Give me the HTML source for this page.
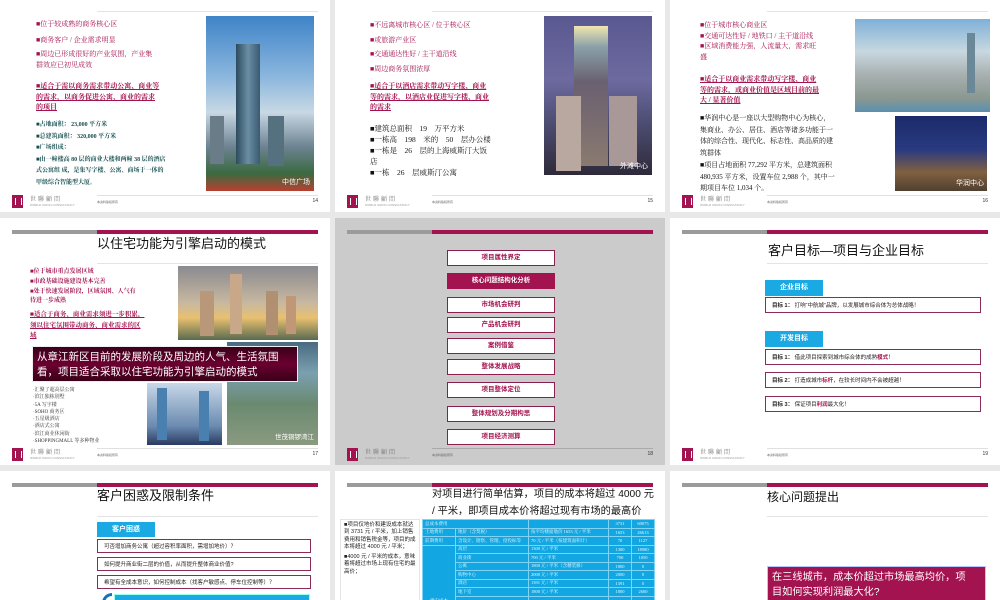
<!DOCTYPE html>
<html style="width:1000px;height:600px;overflow:hidden"><head><meta charset="utf-8"><style>
*{margin:0;padding:0;box-sizing:border-box}
body{width:1000px;height:600px;background:#e8e8e8;position:relative;overflow:hidden;font-family:"Liberation Sans","Noto Sans CJK SC",sans-serif}
.s{position:absolute;width:330px;height:247px;background:#fff;overflow:hidden}
.a{position:absolute;white-space:nowrap}
.bar1{position:absolute;left:12px;top:12px;width:85px;height:4px;background:#9b9b9b}
.bar2{position:absolute;left:97px;top:12px;width:221px;height:4px;background:#a3134f}
.tl{position:absolute;left:97px;width:221px;height:1px;background:#e4e4e4}
.fl{position:absolute;left:97px;top:230px;width:221px;height:1px;background:#e0e0e0}
.logo{position:absolute;left:12px;top:230px;width:11px;height:13px;background:#a3134f}
.logo:after{content:"";position:absolute;left:3px;top:3px;width:5px;height:7px;border-left:1px solid #fff;border-right:1px solid #fff}
.lt{position:absolute;left:30px;top:229px;font-size:6px;color:#777;font-family:"Noto Serif CJK SC",serif;letter-spacing:2px}
.lt2{position:absolute;left:30px;top:238px;font-size:3px;color:#999;white-space:nowrap}
.ft{position:absolute;left:97px;top:235px;font-size:3px;color:#666}
.pn{position:absolute;right:12px;top:233px;font-size:5px;color:#333}
.sf{font-family:"Liberation Serif","Noto Serif CJK SC",serif}
.m{color:#a3134f}.g{color:#174f50}
.b{font-weight:bold}.u{text-decoration:underline}
.t{font-size:7px;line-height:10.5px}
.ttl{position:absolute;font-size:13px;color:#111;white-space:nowrap}
.bb{position:absolute;background:#1aa9e3;color:#fff;font-size:7px;text-align:center;font-weight:bold}
.bx{position:absolute;border:1.5px solid #8c2a5a;font-size:5.5px;padding-left:6px;color:#222;background:#fff;display:flex;align-items:center;white-space:nowrap}
.nb{position:absolute;left:112px;width:108px;height:16px;border:1.5px solid #8a1f4f;background:#fff;color:#a3134f;font-size:6.5px;text-align:center;line-height:13px;font-weight:bold}
table{border-collapse:collapse;font-family:"Liberation Serif","Noto Serif CJK SC",serif}
td{border:1px solid #7fd4f3;color:#e6f7ff;font-size:4.5px;padding:0 2px;height:8.5px;background:#12a7e2;white-space:nowrap;overflow:hidden}
</style></head><body>

<!-- slide 14 -->
<div class="s" style="left:0;top:-35px">
<div class="tl" style="top:46px"></div>
<div class="a sf t m" style="left:36px;top:54px">■位于较成熟的商务核心区</div>
<div class="a sf t m" style="left:36px;top:70px">■商务客户 / 企业需求明显</div>
<div class="a sf t m" style="left:36px;top:84px">■周边已形成很好的产业氛围，产业集<br>群效应已初见成效</div>
<div class="a sf t m b u" style="left:36px;top:116px">■适合于需以商务需求带动公寓、商业等<br>的需求，以商务促进公寓、商业的需求<br>的项目</div>
<div class="a sf g b" style="left:36px;top:155px;font-size:6px;line-height:11.5px">■占地面积： 23,000 平方米<br>■总建筑面积： 320,000 平方米<br>■广场组成：<br>■由一幢楼高 80 层的商业大楼和两幢 38 层的酒店<br>式公寓组 成，是集写字楼、公寓、商场于一体的<br>甲级综合智能型大厦。</div>
<div class="a" style="left:206px;top:51px;width:108px;height:175px;background:linear-gradient(180deg,#3f84c8 0%,#8cb7de 35%,#c8d8e4 55%,#6c8290 75%,#3a6a40 90%,#b84030 100%)">
<div class="a" style="left:30px;top:28px;width:24px;height:120px;background:linear-gradient(90deg,#2d4a5e,#6b8ea4,#3a5a70)"></div>
<div class="a" style="left:62px;top:100px;width:16px;height:50px;background:#55707e"></div>
<div class="a" style="left:4px;top:100px;width:14px;height:48px;background:#6a7c88"></div>
<div class="a" style="right:4px;bottom:4px;color:#fff;font-size:7px">中信广场</div></div>
<div class="fl"></div><div class="logo"></div><div class="lt">世聯顧問</div><div class="lt2">WORLD UNION CONSULTANCY</div><div class="ft">本资料版权所有</div><div class="pn">14</div>
</div>

<!-- slide 15 -->
<div class="s" style="left:335px;top:-35px">
<div class="tl" style="top:46px"></div>
<div class="a sf t m" style="left:35px;top:53px;line-height:14.5px">■不远离城市核心区 / 位于核心区<br>■或旅游产业区<br>■交通通达性好 / 主干道沿线<br>■周边商务氛围浓厚</div>
<div class="a sf t m b u" style="left:35px;top:116px">■适合于以酒店需求带动写字楼、商业<br>等的需求，以酒店业促进写字楼、商业<br>的需求</div>
<div class="a sf" style="left:35px;top:158px;font-size:7.5px;line-height:11px;color:#111">■建筑总面积　19　万平方米<br>■一栋高　198　米的　50　层办公楼<br>■一栋是　26　层的上海威斯汀大饭<br>店<br>■一栋　26　层威斯汀公寓</div>
<div class="a" style="left:209px;top:51px;width:108px;height:159px;background:linear-gradient(180deg,#5a5890 0%,#6d6aa0 40%,#4a4a6e 70%,#2e2a3a 100%)">
<div class="a" style="left:30px;top:10px;width:34px;height:140px;background:linear-gradient(180deg,#f0e6b0 0%,#8aa0a8 15%,#6a6070 40%,#8a7a70 100%)"></div>
<div class="a" style="left:12px;top:80px;width:25px;height:75px;background:#b8a8a0"></div>
<div class="a" style="left:65px;top:80px;width:28px;height:70px;background:#a89898"></div>
<div class="a" style="right:4px;bottom:4px;color:#fff;font-size:7px">外滩中心</div></div>
<div class="fl"></div><div class="logo"></div><div class="lt">世聯顧問</div><div class="lt2">WORLD UNION CONSULTANCY</div><div class="ft">本资料版权所有</div><div class="pn">15</div>
</div>

<!-- slide 16 -->
<div class="s" style="left:670px;top:-35px">
<div class="tl" style="top:46px"></div>
<div class="a sf t m" style="left:30px;top:55px">■位于城市核心商业区<br>■交通可达性好 / 地铁口 / 主干道沿线<br>■区域消费能力强，人流量大，需求旺<br>盛</div>
<div class="a sf t m b u" style="left:30px;top:109px">■适合于以商业需求带动写字楼、商业<br>等的需求，或商业价值是区域目前的最<br>大 / 显著价值</div>
<div class="a sf" style="left:30px;top:148px;font-size:7px;line-height:11.5px;color:#111">■华润中心是一座以大型购物中心为核心，<br>集商业、办公、居住、酒店等诸多功能于一<br>体的综合性、现代化、标志性、高品质的建<br>筑群体</div>
<div class="a sf" style="left:30px;top:195px;font-size:7px;line-height:11.5px;color:#111">■项目占地面积 77,292 平方米，总建筑面积<br>480,935 平方米，设置车位 2,988 个，其中一<br>期项目车位 1,034 个。</div>
<div class="a" style="left:185px;top:54px;width:135px;height:93px;background:linear-gradient(180deg,#7fb0d8 0%,#c8d8e0 35%,#a8b0b0 60%,#8a9890 85%,#5a90b0 100%)">
<div class="a" style="left:112px;top:14px;width:8px;height:60px;background:#6a8898"></div></div>
<div class="a" style="left:225px;top:151px;width:92px;height:75px;background:linear-gradient(180deg,#1a2a6a 0%,#2a3a80 45%,#806040 75%,#504030 100%)">
<div class="a" style="right:3px;bottom:3px;color:#fff;font-size:7px">华润中心</div></div>
<div class="fl"></div><div class="logo"></div><div class="lt">世聯顧問</div><div class="lt2">WORLD UNION CONSULTANCY</div><div class="ft">本资料版权所有</div><div class="pn">16</div>
</div>

<!-- slide 17 -->
<div class="s" style="left:0;top:218px">
<div class="bar1"></div><div class="bar2"></div>
<div class="ttl" style="left:97px;top:15px">以住宅功能为引擎启动的模式</div>
<div class="tl" style="top:45px"></div>
<div class="a sf m b" style="left:30px;top:50px;font-size:6px;line-height:9.8px">■位于城市重点发展区域<br>■市政基础设施建设基本完善<br>■处于快速发展阶段，区域氛围、人气有<br>待进一步成熟</div>
<div class="a sf m b u" style="left:30px;top:92px;font-size:6.5px;line-height:10.5px">■适合于商务、商业需求须进一步积累，<br>须以住宅氛围带动商务、商业需求的区<br>域</div>
<div class="a" style="left:178px;top:48px;width:140px;height:74px;background:linear-gradient(180deg,#8a8a90 0%,#c8b8a0 50%,#e8c070 70%,#5a6a50 100%)">
<div class="a" style="left:52px;top:8px;width:12px;height:60px;background:#c8a888"></div>
<div class="a" style="left:22px;top:25px;width:14px;height:45px;background:#b89878"></div>
<div class="a" style="left:88px;top:25px;width:12px;height:44px;background:#b09070"></div>
<div class="a" style="left:108px;top:30px;width:10px;height:38px;background:#c09878"></div></div>
<div class="a" style="left:227px;top:124px;width:91px;height:103px;background:linear-gradient(180deg,#4a6a80 0%,#7aa0b0 30%,#6a8a70 60%,#8a9a80 100%)">
<div class="a" style="right:4px;bottom:4px;color:#fff;font-size:6.5px">世茂铜锣湾江</div></div>
<div class="a" style="left:147px;top:165px;width:75px;height:62px;background:linear-gradient(180deg,#c8d8e8,#6a8ab0 70%,#2a3a60)">
<div class="a" style="left:10px;top:5px;width:10px;height:52px;background:#4a80b0"></div>
<div class="a" style="left:52px;top:8px;width:10px;height:50px;background:#4a80b0"></div></div>
<div class="a" style="left:32px;top:128px;width:266px;height:36px;background:linear-gradient(180deg,#3a0018,#6a0030 50%,#3a0018);border:1px solid #eee;color:#fff;font-size:10.5px;line-height:15px;padding:3px 0 0 4px;white-space:nowrap;overflow:hidden">从章江新区目前的发展阶段及周边的人气、生活氛围<br>看，项目适合采取以住宅功能为引擎启动的模式</div>
<div class="a sf" style="left:33px;top:169px;font-size:5px;line-height:7.3px;color:#333">·汇聚了超高层公寓<br>·滨江独栋别墅<br>·5A 写字楼<br>·SOHO 商务区<br>·五星级酒店<br>·酒店式公寓<br>·滨江商业休闲街<br>·SHOPPINGMALL 等多种物业</div>
<div class="fl"></div><div class="logo"></div><div class="lt">世聯顧問</div><div class="lt2">WORLD UNION CONSULTANCY</div><div class="ft">本资料版权所有</div><div class="pn">17</div>
</div>

<!-- slide 18 -->
<div class="s" style="left:335px;top:218px;background:#cbcbcb">
<div class="bar1"></div><div class="bar2"></div>
<div class="nb" style="top:32px">项目属性界定</div>
<div class="nb" style="top:55px;background:#a3134f;color:#fff;border-color:#a3134f">核心问题结构化分析</div>
<div class="nb" style="top:79px">市场机会研判</div>
<div class="nb" style="top:99px">产品机会研判</div>
<div class="nb" style="top:120px">案例借鉴</div>
<div class="nb" style="top:141px">整体发展战略</div>
<div class="nb" style="top:164px">项目整体定位</div>
<div class="nb" style="top:188px">整体规划及分期构思</div>
<div class="nb" style="top:211px">项目经济测算</div>
<div class="fl" style="background:#aaa"></div><div class="logo"></div><div class="lt">世聯顧問</div><div class="lt2">WORLD UNION CONSULTANCY</div><div class="ft">本资料版权所有</div><div class="pn">18</div>
</div>

<!-- slide 19 -->
<div class="s" style="left:670px;top:218px">
<div class="bar1"></div><div class="bar2"></div>
<div class="ttl" style="left:98px;top:22px">客户目标—项目与企业目标</div>
<div class="tl" style="top:45px"></div>
<div class="bb" style="left:95px;top:62px;width:58px;height:16px;line-height:16px">企业目标</div>
<div class="bx" style="left:95px;top:79px;width:216px;height:16px"><b>目标 1：</b>&nbsp;打响“中航城”品牌，以发展城市综合体为总体战略！</div>
<div class="bb" style="left:95px;top:113px;width:58px;height:16px;line-height:16px">开发目标</div>
<div class="bx" style="left:95px;top:131px;width:216px;height:16px"><b>目标 1：</b>&nbsp;借此项目探索到城市综合体的成熟<b style="color:#a3134f">模式</b>！</div>
<div class="bx" style="left:95px;top:154px;width:216px;height:16px"><b>目标 2：</b>&nbsp;打造成城市<b style="color:#a3134f">标杆</b>，在较长时间内不会被超越！</div>
<div class="bx" style="left:95px;top:178px;width:216px;height:16px"><b>目标 3：</b>&nbsp;保证项目<b style="color:#a3134f">利润</b>最大化！</div>
<div class="fl"></div><div class="logo"></div><div class="lt">世聯顧問</div><div class="lt2">WORLD UNION CONSULTANCY</div><div class="ft">本资料版权所有</div><div class="pn">19</div>
</div>

<!-- row 3 col1 -->
<div class="s" style="left:0;top:471px;height:129px">
<div class="bar1"></div><div class="bar2"></div>
<div class="ttl" style="left:97px;top:14px">客户困惑及限制条件</div>
<div class="tl" style="top:45px"></div>
<div class="bb" style="left:97px;top:51px;width:58px;height:15px;line-height:15px">客户困惑</div>
<div class="bx" style="left:97px;top:68px;width:214px;height:14px">可否增加商务公寓（超过容积率面积，需增加地价）？</div>
<div class="bx" style="left:97px;top:86px;width:214px;height:14px">如何提升商业街二层的价值，从而提升整体商业价值?</div>
<div class="bx" style="left:97px;top:104px;width:214px;height:14px">希望有全成本意识，如何控制成本（找客户敏感点、停车位控制等）？</div>
<div class="a" style="left:114px;top:123px;width:196px;height:12px;background:#1aa9e3;border:1px solid #9fe"></div>
<div class="a" style="left:102px;top:122px;width:10px;height:10px;border-left:3px solid #1a70b0;border-top:3px solid #1a70b0;border-radius:10px 0 0 0"></div>
</div>

<!-- row 3 col2 -->
<div class="s" style="left:335px;top:471px;height:129px">
<div class="bar1"></div><div class="bar2"></div>
<div class="ttl" style="left:97px;top:15px;line-height:17px;font-size:10.2px">对项目进行简单估算，项目的成本将超过 4000 元<br>/ 平米，即项目成本价将超过现有市场的最高价</div>
<div class="a" style="left:5px;top:48px;width:80px;height:90px;border:1px solid #e4e4e4;font-size:5.5px;line-height:7.3px;padding:2px 3px;white-space:normal;color:#222">■项目仅地价和建设成本就达到 3731 元 / 平米，加上销售费用和销售税金等，项目的成本将超过 4000 元 / 平米；<div style="height:3px"></div>■4000 元 / 平米的成本，意味着将超过市场上现有住宅的最高价；</div>
<table class="a" style="left:87px;top:48px;width:232px;table-layout:fixed">
<colgroup><col style="width:33px"><col style="width:73px"><col style="width:80px"><col style="width:23px"><col style="width:23px"></colgroup>
<tr><td colspan="2">总成本费用</td><td></td><td style="text-align:center">3731</td><td style="text-align:center">60075</td></tr>
<tr><td>土地费用</td><td>地价（含契税）</td><td>按平均楼面地价 1653 元 / 平米</td><td style="text-align:center">1653</td><td style="text-align:center">26613</td></tr>
<tr><td>前期费用</td><td>含设计、勘察、管理、招投标等</td><td>70 元 / 平米（按建筑面积计）</td><td style="text-align:center">70</td><td style="text-align:center">1127</td></tr>
<tr><td rowspan="7" style="vertical-align:bottom;text-align:center">建安成本</td><td>高层</td><td>1300 元 / 平米</td><td style="text-align:center">1300</td><td style="text-align:center">18980</td></tr>
<tr><td>商业街</td><td>700 元 / 平米</td><td style="text-align:center">700</td><td style="text-align:center">1050</td></tr>
<tr><td>公寓</td><td>1800 元 / 平米（含精装修）</td><td style="text-align:center">1800</td><td style="text-align:center">0</td></tr>
<tr><td>购物中心</td><td>2000 元 / 平米</td><td style="text-align:center">2000</td><td style="text-align:center">0</td></tr>
<tr><td>酒店</td><td>1391 元 / 平米</td><td style="text-align:center">1391</td><td style="text-align:center">0</td></tr>
<tr><td>地下室</td><td>1800 元 / 平米</td><td style="text-align:center">1800</td><td style="text-align:center">2600</td></tr>
<tr><td></td><td></td><td></td><td></td></tr>
</table>
</div>

<!-- row 3 col3 -->
<div class="s" style="left:670px;top:471px;height:129px">
<div class="bar1"></div><div class="bar2"></div>
<div class="ttl" style="left:97px;top:17px;font-size:12px">核心问题提出</div>
<div class="tl" style="top:45px"></div>
<div class="a" style="left:97px;top:95px;width:219px;height:40px;background:#a3134f;border:1px solid #b8c8ff;color:#fff;font-size:10.2px;line-height:15px;padding:3px 0 0 4px;white-space:nowrap;overflow:hidden">在三线城市，成本价超过市场最高均价，项<br>目如何实现利润最大化?</div>
</div>

</body></html>
